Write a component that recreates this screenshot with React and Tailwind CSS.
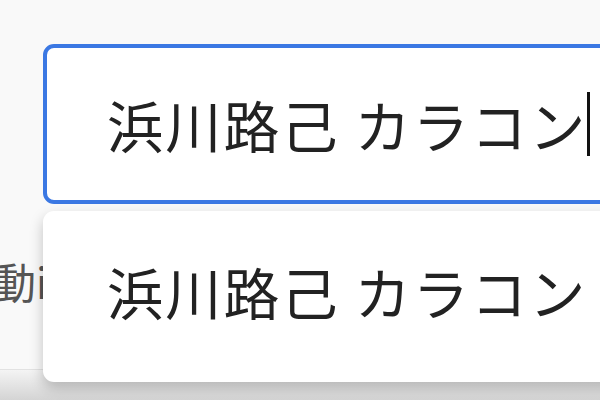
export default function App() {
  const jp = { fontFamily: '"Noto Sans CJK JP", "Noto Sans", sans-serif' };
  return (
    <div className="relative w-[600px] h-[400px] overflow-hidden bg-[#f9f9f9]" style={jp}>
      {/* input */}
      <div className="pt-[44px] pl-[43px]">
        <div className="flex h-[160px] w-[620px] items-center rounded-[11px] border-[4px] border-[#3b78e3] bg-white pl-[60px]">
          <span className="text-[56px] leading-none tracking-[2.2px] text-[#222]">浜川路己 カラコン</span>
          <span className="ml-[0px] h-[64px] w-[3px] bg-[#111]" />
        </div>
      </div>

      {/* row behind the suggestion list */}
      <div className="mt-[56px] flex h-[110px] flex-col justify-between border-b border-[#e2e2e2]">
        <span className="-ml-[6px] text-[42px] leading-none text-[#555]">動i</span>
      </div>
      <div className="h-[30px] bg-gradient-to-b from-[#f4f4f4] to-[#d4d4d4]" />

      {/* suggestions */}
      <div className="absolute left-[43px] top-[211px] h-[171px] w-[620px] rounded-[11px] bg-white shadow-[0_6px_14px_rgba(0,0,0,0.22)]">
        <div className="flex h-full items-center pl-[64px] pb-[12px]">
          <span className="text-[56px] leading-none tracking-[2.2px] text-[#222]">浜川路己 カラコン</span>
        </div>
      </div>
    </div>
  );
}
